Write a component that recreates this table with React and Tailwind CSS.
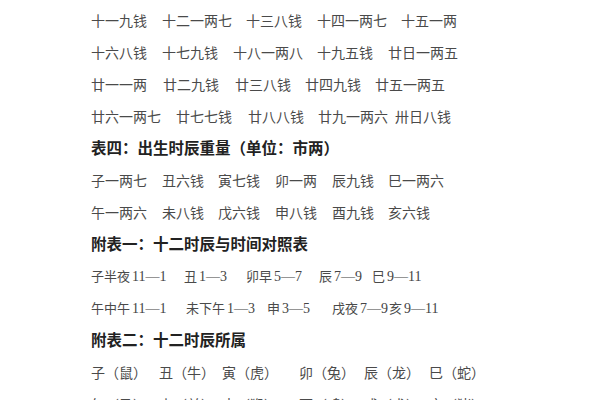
import React from "react";

const cjk = "font-['Noto_Sans_CJK_SC',sans-serif] text-[#4a4a4a]";
const head = "font-['Noto_Sans_CJK_SC',sans-serif] text-[15.5px] font-bold text-[#222]";
const num = "font-['Liberation_Serif',serif] text-[14px]";

// each item: [text, width] — width is the distance to the next item's start
const weightRows = [
  [["十一九钱", 71], ["十二一两七", 84], ["十三八钱", 71], ["十四一两七", 84], ["十五一两"]],
  [["十六八钱", 71], ["十七九钱", 71], ["十八一两八", 84], ["十九五钱", 71], ["廿日一两五"]],
  [["廿一一两", 72], ["廿二九钱", 72], ["廿三八钱", 70], ["廿四九钱", 70], ["廿五一两五"]],
  [["廿六一两七", 85], ["廿七七钱", 72], ["廿八八钱", 70], ["廿九一两六", 77], ["卅日八钱"]],
];

const hourRows = [
  [["子一两七", 71], ["丑六钱", 56], ["寅七钱", 57], ["卯一两", 57], ["辰九钱", 56], ["巳一两六"]],
  [["午一两六", 71], ["未八钱", 56], ["戊六钱", 57], ["申八钱", 57], ["酉九钱", 56], ["亥六钱"]],
];

const timeRows = [
  [["子半夜", "11—1", 93], ["丑", "1—3", 62], ["卯早", "5—7", 73], ["辰", "7—9", 53], ["巳", "9—11"]],
  [["午中午", "11—1", 95], ["未下午", "1—3", 81], ["申", "3—5", 65], ["戌夜", "7—9", 57], ["亥", "9—11"]],
];

const zodiacRows = [
  [["子（鼠）", 68], ["丑（牛）", 63], ["寅（虎）", 77], ["卯（兔）", 65], ["辰（龙）", 65], ["巳（蛇）"]],
  [["午（马）", 68], ["未（羊）", 63], ["申（猴）", 77], ["酉（鸡）", 65], ["戌（犬）", 65], ["亥（猪）"]],
];

function Row({ items }) {
  return (
    <div className={`flex h-[32px] items-center whitespace-nowrap text-[14px] ${cjk}`}>
      {items.map(([t, w]) => (
        <span key={t} className="shrink-0" style={w ? { width: w } : undefined}>
          {t}
        </span>
      ))}
    </div>
  );
}

function TimeRow({ items }) {
  return (
    <div className={`flex h-[32px] items-center whitespace-nowrap text-[13px] ${cjk}`}>
      {items.map(([t, n, w]) => (
        <span key={t} className="shrink-0 flex items-center" style={w ? { width: w } : undefined}>
          <span>{t}</span>
          <span className={`${num} ml-[2px] text-[#444]`}>{n}</span>
        </span>
      ))}
    </div>
  );
}

function Heading({ children }) {
  return <div className={`flex h-[32px] items-center whitespace-nowrap ${head}`}>{children}</div>;
}

export default function App() {
  return (
    <div className="w-[600px] h-[400px] overflow-hidden bg-white pl-[91px] pt-[4px]">
      {weightRows.map((r, i) => (
        <Row key={i} items={r} />
      ))}
      <Heading>表四：出生时辰重量（单位：市两）</Heading>
      {hourRows.map((r, i) => (
        <Row key={i} items={r} />
      ))}
      <Heading>附表一：十二时辰与时间对照表</Heading>
      {timeRows.map((r, i) => (
        <TimeRow key={i} items={r} />
      ))}
      <Heading>附表二：十二时辰所属</Heading>
      {zodiacRows.map((r, i) => (
        <Row key={i} items={r} />
      ))}
    </div>
  );
}
